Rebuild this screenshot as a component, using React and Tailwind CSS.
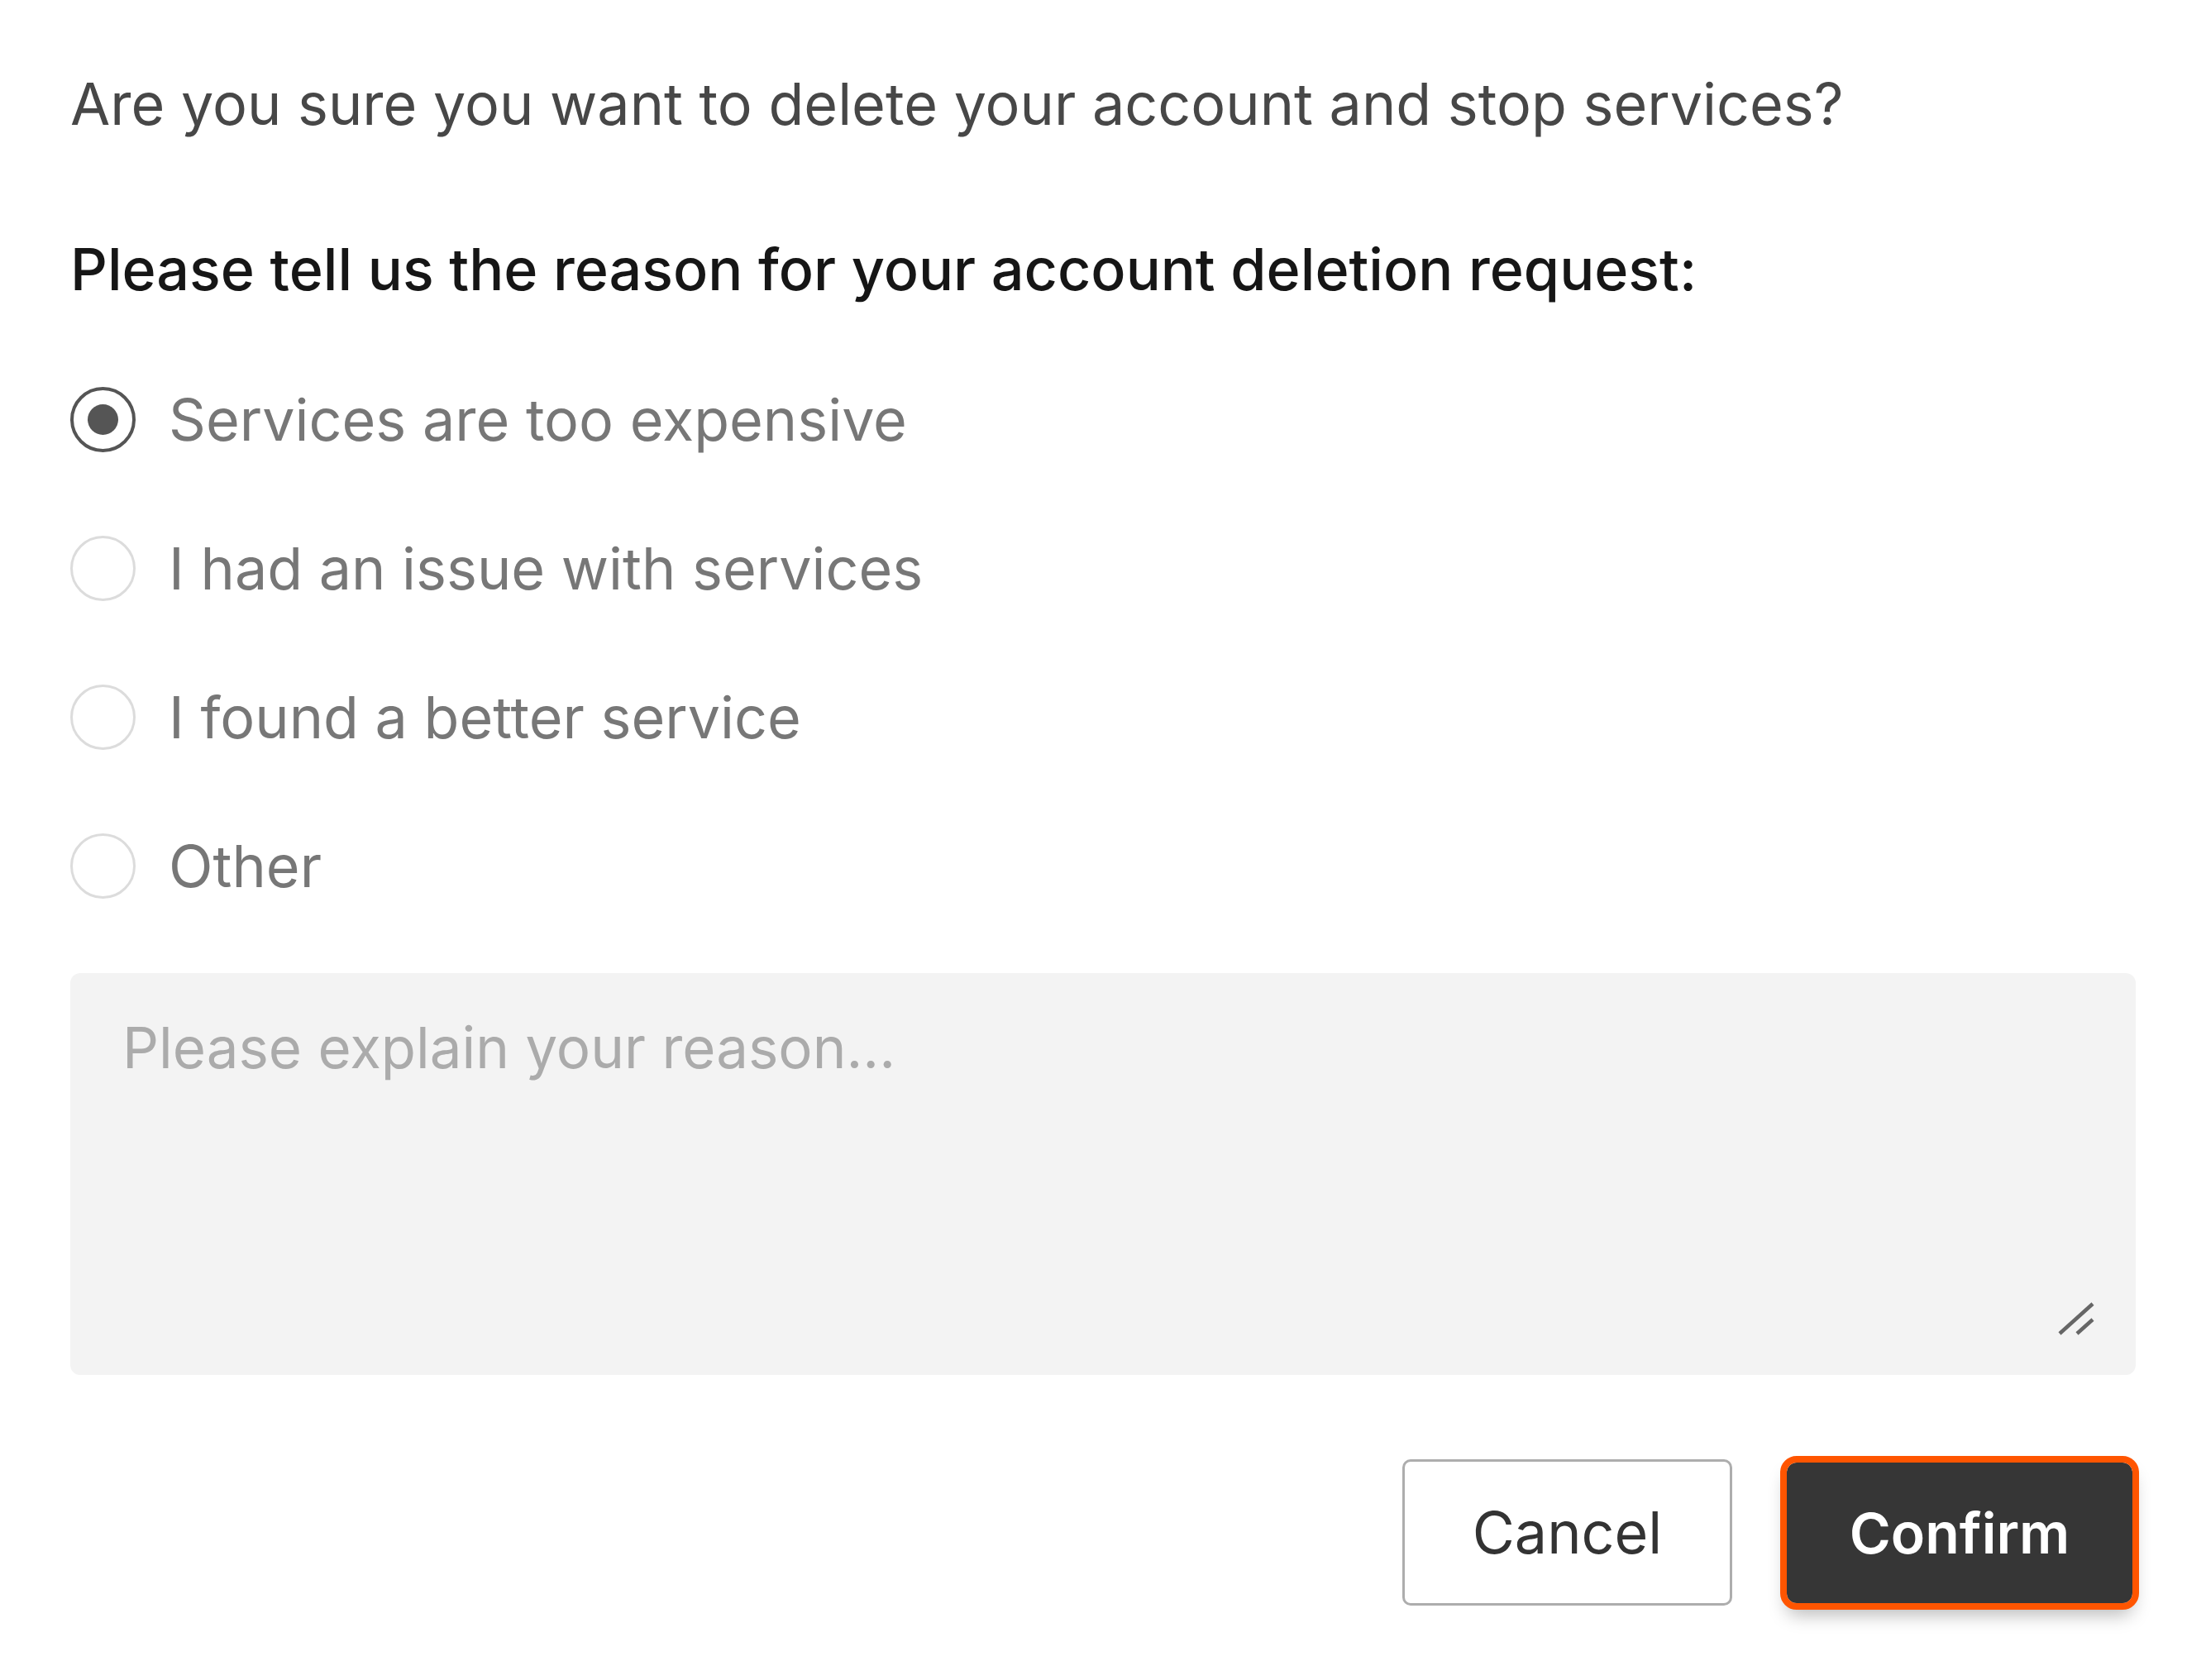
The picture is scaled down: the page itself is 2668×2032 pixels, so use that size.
import { useState } from "react";

const reasons = [
  "Services are too expensive",
  "I had an issue with services",
  "I found a better service",
  "Other",
];

function Radio({ checked }) {
  return checked ? (
    <span className="mt-[11px] w-[79px] h-[79px] shrink-0 rounded-full border-[4px] border-[#555] flex items-center justify-center">
      <span className="w-[37px] h-[37px] rounded-full bg-[#555]"></span>
    </span>
  ) : (
    <span className="mt-[11px] w-[79px] h-[79px] shrink-0 rounded-full border-[3px] border-[#dcdcdc] bg-white"></span>
  );
}

export default function App() {
  const [reason, setReason] = useState(0);

  return (
    <div className="min-h-screen bg-white font-['Inter',sans-serif] px-[85px] pt-[75px]">
      {/* Question */}
      <p className="text-[70px] leading-[102px] text-[#474747]">
        Are you sure you want to delete your account and stop services?
      </p>
      <p className="mt-[98px] text-[70px] leading-[102px] font-medium text-[#161616]">
        Please tell us the reason for your account deletion request:
      </p>

      {/* Options */}
      <div className="mt-[80px] flex flex-col gap-[78px]">
        {reasons.map((r, i) => (
          <label
            key={r}
            onClick={() => setReason(i)}
            className="flex items-start gap-[40px] cursor-pointer"
          >
            <Radio checked={reason === i} />
            <span className="text-[70px] leading-[102px] text-[#777]">{r}</span>
          </label>
        ))}
      </div>

      {/* Explanation */}
      <div className="relative mt-[78px] h-[486px] rounded-[12px] bg-[#f3f3f3]">
        <textarea
          placeholder="Please explain your reason..."
          className="w-full h-full resize-none bg-transparent outline-none pl-[63px] pr-[63px] pt-[39px] text-[69px] leading-[102px] text-[#333] placeholder:text-[#ababab]"
        />
        <svg
          className="absolute right-[50px] bottom-[48px] pointer-events-none"
          width="44"
          height="40"
          viewBox="0 0 44 40"
        >
          <path d="M2 38 L42 2 M23 38 L42 21" stroke="#666" strokeWidth="4.5" fill="none" />
        </svg>
      </div>

      {/* Actions */}
      <div className="mt-[102px] flex items-center justify-end gap-[66px] pr-[4px]">
        <button className="w-[399px] h-[177px] rounded-[10px] border-[3px] border-[#adadad] bg-white text-[70px] text-[#333]">
          Cancel
        </button>
        <button className="w-[418px] h-[170px] rounded-[12px] bg-[#363636] text-[68px] font-semibold text-white outline-[8px] outline-solid outline-[#ff5500] shadow-[0_14px_22px_rgba(0,0,0,0.28)]">
          Confirm
        </button>
      </div>
    </div>
  );
}
